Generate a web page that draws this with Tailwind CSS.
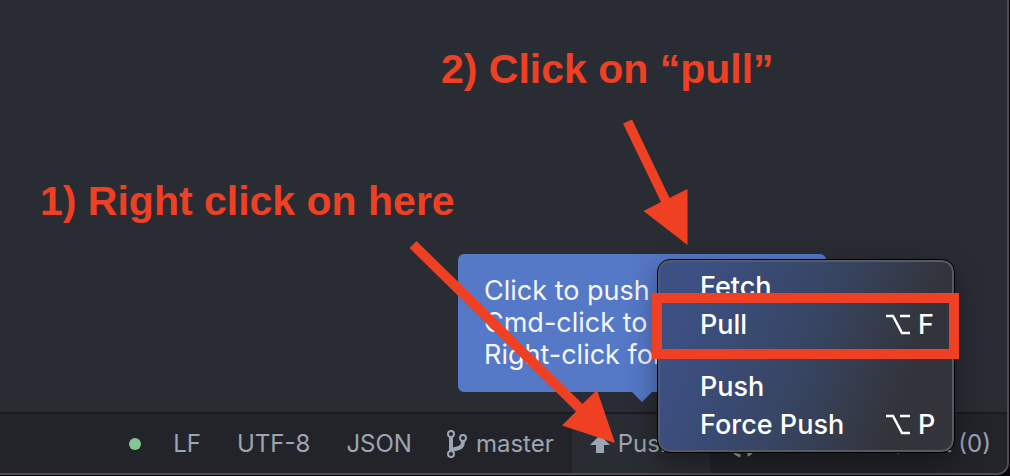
<!DOCTYPE html>
<html lang="en">
<head>
    <meta charset="UTF-8">
    <meta name="viewport" content="width=device-width, initial-scale=1.0">
    <title>How to pull</title>
    <script src="https://cdn.jsdelivr.net/npm/@tailwindcss/browser@4"></script>
</head>
<body class="bg-[#08060c] font-['Inter',sans-serif]">
    <div class="relative flex h-screen flex-col overflow-hidden pr-px pb-px">
        <div class="flex grow flex-col overflow-hidden rounded-br-xl border-r-2 border-b-2 border-[#4c4e50] bg-[#2a2c34]">
            <main class="grow"></main>

            <!-- status bar -->
            <footer class="flex h-[61px] items-stretch justify-end border-t-2 border-[#1a1b1f] bg-[#22242a] text-2xl text-[#9da5b4]">
                <span class="mt-6 mr-8 size-3 rounded-full bg-[#84c794]"></span>
                <button class="mr-9">LF</button>
                <button class="mr-9">UTF-8</button>
                <button class="mr-[34px]">JSON</button>
                <button class="mr-[18px] flex items-center gap-2">
                    <svg class="h-7 w-[22px]" viewBox="0 0 22 28" fill="none" stroke="currentColor" stroke-width="2" aria-hidden="true">
                        <circle cx="5" cy="4" r="3"/>
                        <circle cx="17" cy="8" r="3"/>
                        <circle cx="5" cy="24" r="3"/>
                        <path d="M5 7v14M17 11c0 7-4 7-8 8-2 .5-4 1-4 3" stroke-width="4"/>
                    </svg>
                    master
                </button>
                <button class="flex w-[138px] items-center gap-2 bg-[#2a2c33] px-[18px]">
                    <svg class="h-5 w-5" viewBox="0 0 20 20" fill="currentColor" aria-hidden="true">
                        <path d="M10 1l10 10h-6v8H6v-8H0z"/>
                    </svg>
                    Push
                </button>
                <button class="flex items-center gap-2 px-5">
                    <svg class="size-7" viewBox="0 0 16 16" fill="currentColor" aria-hidden="true">
                        <path d="M8 0a8 8 0 0 0-2.5 15.6c.4.1.5-.2.5-.4v-1.5c-2 .4-2.700-.9-2.900-1.500-.2-.5-.7-1-1-1.200-.4-.2-.9-.7 0-.7s1.400.8 1.600 1.100c.7 1.200 1.900.9 2.300.7.100-.5.300-.9.500-1.100-1.800-.2-3.600-.9-3.600-4 0-.9.300-1.600.800-2.100-.1-.2-.4-1 .1-2.100 0 0 .7-.2 2.200.8a7.500 7.500 0 0 1 4 0c1.500-1 2.200-.8 2.200-.8.500 1.100.200 1.900.1 2.100.500.5.800 1.200.800 2.100 0 3.100-1.900 3.800-3.700 4 .300.300.600.8.600 1.500v2.200c0 .2.100.5.500.4A8 8 0 0 0 8 0z"/>
                    </svg>
                    GitHub
                </button>
                <button class="flex items-center gap-2 pr-4 pl-5">
                    <svg class="size-7" viewBox="0 0 28 28" aria-hidden="true">
                        <path d="M14 4l10 10-10 10L4 14z" fill="currentColor"/>
                        <circle cx="14" cy="14" r="3" fill="#22242a"/>
                    </svg>
                    Git (0)
                </button>
            </footer>
        </div>

        <!-- tooltip of the push button -->
        <div role="tooltip" class="absolute right-46 bottom-[84px] w-92 rounded-md bg-[#5578c7] px-[26px] pt-[21px] pb-[21px] text-[27px] leading-8 whitespace-nowrap text-[#f4f6fb]">
            <p>Click to push</p>
            <p>Cmd-click to force</p>
            <p>Right-click for more</p>
            <svg class="absolute top-full left-[174px] h-[10px] w-5" viewBox="0 0 20 10" fill="#5578c7" aria-hidden="true"><path d="M0 0h20L10 10z"/></svg>
        </div>

        <!-- context menu -->
        <div role="menu" class="absolute right-14 bottom-6 flex w-[296px] flex-col rounded-xl border-2 border-[#555a67] bg-linear-110 from-[#3c5084] from-10% via-[#374562] via-50% to-[#33343b] to-80% pt-[6px] pb-[6px] text-[27px] leading-[38px] font-medium text-white shadow-[0_10px_30px_rgb(0_0_0/0.4)] outline-1 outline-black">
            <button role="menuitem" class="flex pl-10">Fetch</button>
            <button role="menuitem" class="flex items-center justify-between pr-[18px] pl-10">
                Pull
                <span class="flex items-center gap-2">
                    <svg class="h-[22px] w-6" viewBox="0 0 24 22" fill="none" stroke="currentColor" stroke-width="2.500" aria-hidden="true"><path d="M0 2h7l9 17h8M14 2h10"/></svg>
                    <kbd class="w-4 font-['Inter',sans-serif]">F</kbd>
                </span>
            </button>
            <button role="menuitem" class="mt-6 flex pl-10">Push</button>
            <button role="menuitem" class="flex items-center justify-between pr-[18px] pl-10">
                Force Push
                <span class="flex items-center gap-2">
                    <svg class="h-[22px] w-6" viewBox="0 0 24 22" fill="none" stroke="currentColor" stroke-width="2.500" aria-hidden="true"><path d="M0 2h7l9 17h8M14 2h10"/></svg>
                    <kbd class="w-4 font-['Inter',sans-serif]">P</kbd>
                </span>
            </button>
        </div>

        <!-- red annotations, anchored to the same corner as the menu -->
        <div class="pointer-events-none absolute right-0 bottom-0 h-[476px] w-[1010px] font-['Liberation_Sans',sans-serif] text-[41px] leading-12 font-bold text-[#ef4023]">
            <p class="absolute top-[45px] left-[441px] whitespace-nowrap">2) Click on “pull”</p>
            <p class="absolute top-[177px] left-10 whitespace-nowrap">1) Right click on here</p>
            <div class="absolute top-[293px] left-[652px] h-[66px] w-[307px] border-[10px] border-[#ef4023]"></div>
            <svg class="absolute inset-0 size-full" viewBox="0 0 1010 476" fill="currentColor" aria-hidden="true">
                <path d="M623 123.500l9-4L669.500 198l18-9v56l-44-34 17.500-9z"/>
                <path d="M409.500 248l7-7L582.500 404 597 390l18 53-53-17.500 14-14z"/>
            </svg>
        </div>
    </div>
</body>
</html>
